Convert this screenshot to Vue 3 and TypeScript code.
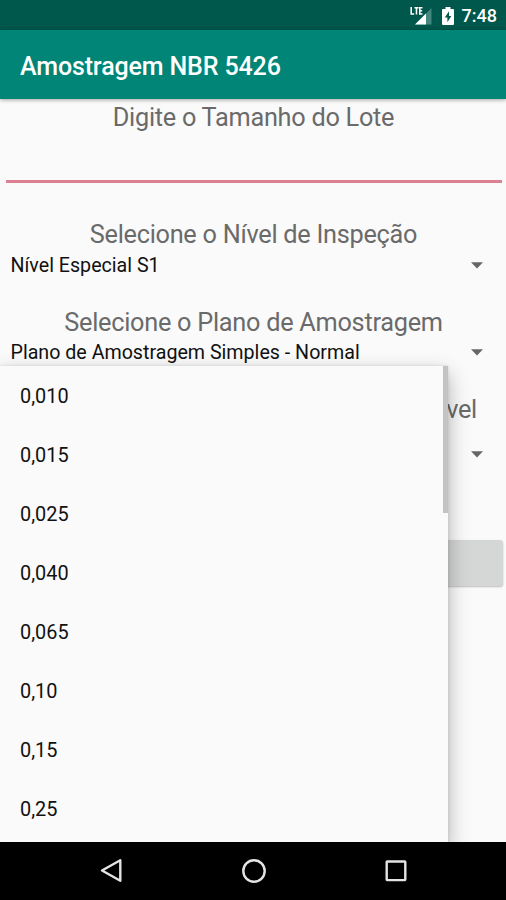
<script setup lang="ts">
import { ref } from 'vue'

interface Field {
  label: string
  value: string
  kind: string
}

const fields: Field[] = [
  { label: 'Selecione o Nível de Inspeção', value: 'Nível Especial S1', kind: 'level' },
  { label: 'Selecione o Plano de Amostragem', value: 'Plano de Amostragem Simples - Normal', kind: 'plan' },
  { label: 'vel', value: '', kind: 'quality' },
]
const options: string[] = ['0,010', '0,015', '0,025', '0,040', '0,065', '0,10', '0,15', '0,25']
const lot = ref('')
</script>

<template>
  <div class="screen">
    <header class="status">
      <svg class="signal" width="22" height="20" viewBox="0 0 22 20">
        <path d="M21.5 2V18.5H5Z" fill="#43877f" />
        <path d="M16 7.5V18.5H5Z" fill="#fff" />
        <path d="M1.2 1V8H4.2M4.5 1.7H8.6M6.5 1.7V8.6M12.5 1.7H9.8V8H12.5M9.8 4.7H12.2" fill="none" stroke="#004f45" stroke-width="3" />
        <path d="M1.2 1V8H4.2M4.5 1.7H8.6M6.5 1.7V8.6M12.5 1.7H9.8V8H12.5M9.8 4.7H12.2" fill="none" stroke="#fff" stroke-width="1.6" />
      </svg>
      <svg class="battery" width="12" height="18" viewBox="0 0 12 19" preserveAspectRatio="none">
        <path d="M3.5 0H8.5V2H11Q12 2 12 3V18Q12 19 11 19H1Q0 19 0 18V3Q0 2 1 2H3.5Z" fill="#fff" />
        <path d="M7 4.5L2.8 11H5.4V16L9.3 9.5H7Z" fill="#00594d" />
      </svg>
      <span class="clock">7:48</span>
    </header>
    <div class="appbar"><h1>Amostragem NBR 5426</h1></div>
    <main class="form">
      <label class="label lot-label" for="lot">Digite o Tamanho do Lote</label>
      <input id="lot" v-model="lot" class="lot" type="text" />
      <section v-for="f in fields" :key="f.kind" class="field" :class="f.kind">
        <div class="label">{{ f.label }}</div>
        <div class="spinner">
          <span>{{ f.value }}</span>
          <svg width="12" height="7" viewBox="0 0 12 7"><path d="M0 .3H12L6 6.5Z" fill="#666" /></svg>
        </div>
      </section>
      <button class="submit" type="button" aria-label="Calcular"></button>
      <div class="popup">
        <ul>
          <li v-for="o in options" :key="o">{{ o }}</li>
        </ul>
        <i class="thumb"></i>
      </div>
    </main>
    <nav class="nav">
      <svg width="24" height="26" viewBox="0 0 24 26"><path d="M21.3 2.3V22.7L3 12.5Z" class="stroke" /></svg>
      <svg width="26" height="26" viewBox="0 0 26 26"><circle cx="13" cy="13" r="10.7" class="stroke" /></svg>
      <svg width="24" height="26" viewBox="0 0 24 26"><rect x="2.7" y="3.5" width="18.6" height="18.6" rx=".5" class="stroke" /></svg>
    </nav>
  </div>
</template>

<style>
body {
  margin: 0;
}
</style>

<style scoped>
.screen {
  width: 506px;
  height: 900px;
  display: flex;
  flex-direction: column;
  overflow: hidden;
  background: #fafafa;
  font-family: Roboto, "Liberation Sans", sans-serif;
}
.status {
  height: 30px;
  flex: none;
  display: flex;
  justify-content: flex-end;
  align-items: center;
  padding: 0 9px 0 0;
  box-sizing: border-box;
  background: #00574b;
  color: #fff;
}
.signal {
  margin: 1px 10px 0 0;
}
.battery {
  margin: 1px 8px 0 0;
}
.clock {
  font-size: 18px;
  font-weight: 500;
  line-height: 28px;
  padding-top: 2px;
}
.appbar {
  position: relative;
  z-index: 1;
  height: 69px;
  flex: none;
  display: flex;
  align-items: center;
  padding: 3px 20px 0;
  box-sizing: border-box;
  background: #008577;
  box-shadow: 0 1px 4px rgba(0, 0, 0, 0.35);
}
h1 {
  margin: 0;
  color: #fff;
  font-size: 25px;
  font-weight: 500;
  letter-spacing: -0.13px;
  white-space: nowrap;
}
.form {
  position: relative;
  flex: 1;
  display: flex;
  flex-direction: column;
  overflow: hidden;
}
.label {
  height: 34px;
  line-height: 36px;
  flex: none;
  text-align: center;
  font-size: 25.3px;
  letter-spacing: -0.27px;
  color: #6a6a6a;
  white-space: nowrap;
  padding-left: 1px;
}
.lot-label {
  line-height: 38px;
}
.lot {
  margin: 0 4px 0 6px;
  height: 50px;
  padding: 0 6px;
  border: 0;
  border-bottom: 3px solid #db8092;
  border-radius: 0;
  background: none;
  font: 25px Roboto, sans-serif;
  box-sizing: border-box;
  outline: 0;
}
.field {
  flex: none;
  height: 87.5px;
}
.level {
  margin-top: 34px;
}
.spinner {
  height: 28px;
  display: flex;
  align-items: center;
  justify-content: space-between;
  padding: 0 23px 0 10.5px;
  font-size: 19.65px;
  color: #111;
}
.quality {
  height: 128px;
}
.quality .label {
  text-align: right;
  padding-right: 29px;
}
.quality .spinner {
  height: 57px;
}
.submit {
  margin: 20px 3px 0 4px;
  height: 46px;
  flex: none;
  border: 0;
  border-radius: 3px;
  background: #d5d7d6;
  box-shadow: 0 1px 2px rgba(0, 0, 0, 0.25);
}
.popup {
  position: absolute;
  left: 0;
  top: 267px;
  width: 448px;
  height: 480px;
  background: #fafafa;
  box-shadow: 0 8px 20px rgba(0, 0, 0, 0.3), 0 0 3px rgba(0, 0, 0, 0.12);
}
ul {
  list-style: none;
  margin: 0;
  padding: 1px 0 0;
}
li {
  height: 59px;
  line-height: 59px;
  padding-left: 20px;
  font-size: 19.9px;
  color: #111;
}
.thumb {
  position: absolute;
  right: 0;
  top: 0;
  width: 5px;
  height: 147px;
  background: #c3c3c3;
}
.nav {
  position: relative;
  z-index: 1;
  height: 58px;
  flex: none;
  display: flex;
  align-items: center;
  justify-content: space-between;
  padding: 0 98px 0 99px;
  box-sizing: border-box;
  background: #000;
}
.stroke {
  fill: none;
  stroke: #e4e4e4;
  stroke-width: 2.4;
  stroke-linejoin: round;
}
</style>
